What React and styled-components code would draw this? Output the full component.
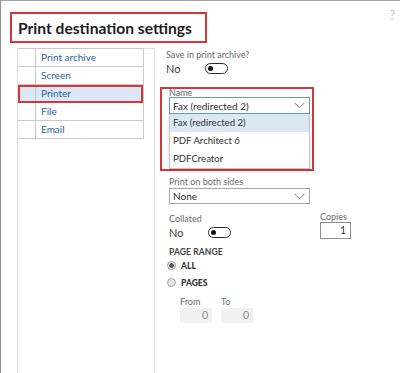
import React from 'react'
import styled, { createGlobalStyle } from 'styled-components'

const GlobalStyle = createGlobalStyle`
    html, body {
        margin: 0;
        padding: 0;
        background: #ffffff;
    }
    body {
        font-family: Lato, "Open Sans", "Liberation Sans", sans-serif;
        color: #333333;
    }
`

const Frame = styled.div`
    box-sizing: border-box;
    width: 400px;
    height: 373px;
    border-top: 1px solid #a4a4a4;
    border-left: 1px solid #8c8c8c;
    display: flex;
    flex-direction: column;
    overflow: hidden;
`

const Header = styled.div`
    display: flex;
    align-items: flex-start;
    margin: 11px 0 0 9px;
`

const TitleBox = styled.div`
    box-sizing: border-box;
    width: 197px;
    height: 31px;
    border: 2px solid #d4363a;
    padding-left: 6px;
    display: flex;
    align-items: center;
`

const Title = styled.h1`
    margin: 0;
    font-size: 15.6px;
    font-weight: 700;
    color: #1e1e1e;
    white-space: nowrap;
`

const Help = styled.span`
    margin: -5px 5px 0 auto;
    font-size: 13px;
    font-weight: 300;
    color: #9a9a9a;
`

const Body = styled.div`
    display: flex;
    flex: 1;
    margin-top: 5px;
`

const Nav = styled.div`
    box-sizing: border-box;
    width: 138px;
    margin-left: 16px;
    border: 1px solid #e2e2e2;
    border-bottom: none;
    border-radius: 2px 2px 0 0;
`

const NavList = styled.div`
    width: 125px;
    border-right: 1px solid #c9c9c9;
    margin-top: -1px;
    border-top: 1px solid #c9c9c9;
`

const NavRow = styled.div`
    display: grid;
    grid-template-columns: 18px 1fr;
    height: 18px;
    box-sizing: border-box;
    border-bottom: 1px solid #c9c9c9;
    background: ${({ $active }) => ($active ? '#dce8f6' : 'transparent')};
    outline: ${({ $active }) => ($active ? '2px solid #d4363a' : 'none')};
    outline-offset: -2px;
`

const NavMark = styled.span`
    border-right: 1px solid #c9c9c9;
`

const NavText = styled.span`
    padding-left: 5px;
    font-size: 10px;
    line-height: 17px;
    color: #2d5f9a;
`

const Form = styled.div`
    flex: 1;
    padding-left: 14px;
    display: flex;
    flex-direction: column;
`

const Label = styled.div`
    font-size: 9px;
    line-height: ${({ $tight }) => ($tight ? 10 : 13)}px;
    color: #6a6a6a;
    white-space: nowrap;
`

const Field = styled.div`
    display: flex;
    flex-direction: column;
    margin-left: ${({ $shift }) => $shift || 0}px;
    margin-top: ${({ $top }) => $top || 0}px;
`

const ToggleRow = styled.div`
    display: flex;
    align-items: center;
    height: 15px;
`

const Value = styled.span`
    width: 39px;
    font-size: 11px;
    color: #444444;
`

const Toggle = styled.span`
    box-sizing: border-box;
    width: 23px;
    height: 11px;
    border: 1.5px solid #2b2b2b;
    border-radius: 6px;
    display: flex;
    align-items: center;
    padding-left: 2px;

    &::before {
        content: '';
        width: 5px;
        height: 5px;
        border-radius: 50%;
        background: #111111;
    }
`

const NameBox = styled.div`
    box-sizing: border-box;
    width: 154px;
    margin: 11px 0 0 -9px;
    padding: 0 2px 0 7px;
    border: 2px solid #d4363a;
`

const NameLabel = styled(Label)`
    line-height: 8px;
    height: 8px;
    overflow: visible;
`

const Select = styled.div`
    box-sizing: border-box;
    width: 141px;
    height: ${({ $h }) => $h || 17}px;
    border: 1px solid ${({ $focus }) => ($focus ? '#5d9ccb' : '#a6a6a6')};
    display: flex;
    align-items: center;
    justify-content: space-between;
    padding: 0 4px 0 3px;
    font-size: 10px;
    color: #2f2f2f;
    background: #ffffff;
`

const Menu = styled.div`
    box-sizing: border-box;
    width: 141px;
    border: 1px solid #c4c4c4;
    border-top: none;
    box-shadow: 0 2px 4px rgba(0, 0, 0, 0.12);
`

const MenuItem = styled.div`
    height: 18px;
    padding-left: 3px;
    font-size: 9.6px;
    line-height: 18px;
    color: #333333;
    background: ${({ $active }) => ($active ? '#dbe7f4' : '#ffffff')};
`

const Pair = styled.div`
    display: flex;
    margin-top: 8px;
`

const NumberBox = styled.div`
    box-sizing: border-box;
    width: ${({ $w }) => $w || 31}px;
    height: ${({ $h }) => $h || 17}px;
    border: ${({ $muted }) => ($muted ? 'none' : '1px solid #8e8e8e')};
    background: ${({ $muted }) => ($muted ? '#f1f1f1' : '#ffffff')};
    color: ${({ $muted }) => ($muted ? '#8a8a8a' : '#333333')};
    font-size: 10.5px;
    text-align: right;
    padding-right: 4px;
    line-height: 15px;
`

const Section = styled.div`
    margin-top: 7px;
    font-size: 8.5px;
    font-weight: 700;
    color: #444444;
    letter-spacing: 0.1px;
`

const RadioRow = styled.div`
    display: flex;
    align-items: center;
    height: 17px;
    margin-left: -2px;
    font-size: 8.5px;
    font-weight: 900;
    color: #333333;
    gap: 5px;
`

const Radio = styled.span`
    box-sizing: border-box;
    width: 9px;
    height: 9px;
    border-radius: 50%;
    border: 1px solid #a8a8a8;
    background: radial-gradient(circle, ${({ $on }) => ($on ? '#555 0 2px, #e6e6e6 2.5px' : '#e6e6e6 0')});
`

const RangeRow = styled.div`
    display: flex;
    gap: 9px;
    margin: 4px 0 0 11px;
`

const Chevron = () => (
    <svg width="11" height="7" viewBox="0 0 11 7">
        <path d="M0.5 0.8 L5.5 5.8 L10.5 0.8" fill="none" stroke="#7a7a7a" strokeWidth="1" />
    </svg>
)

const navItems = ['Print archive', 'Screen', 'Printer', 'File', 'Email']
const printers = ['Fax (redirected 2)', 'PDF Architect 6', 'PDFCreator']

export default function App()
{
    return (
        <>
            <GlobalStyle />
            <Frame>
                <Header>
                    <TitleBox>
                        <Title>Print destination settings</Title>
                    </TitleBox>
                    <Help>?</Help>
                </Header>
                <Body>
                    <Nav>
                        <NavList>
                            {navItems.map((item) =>
                                <NavRow key={item} $active={item === 'Printer'}>
                                    <NavMark />
                                    <NavText>{item}</NavText>
                                </NavRow>
                            )}
                        </NavList>
                    </Nav>
                    <Form>
                        <Field $shift={-3}>
                            <Label>Save in print archive?</Label>
                            <ToggleRow>
                                <Value>No</Value>
                                <Toggle />
                            </ToggleRow>
                        </Field>

                        <NameBox>
                            <NameLabel>Name</NameLabel>
                            <Select $focus>
                                <span>Fax (redirected 2)</span>
                                <Chevron />
                            </Select>
                            <Menu>
                                {printers.map((p, i) =>
                                    <MenuItem key={p} $active={i === 0}>{p}</MenuItem>
                                )}
                            </Menu>
                        </NameBox>

                        <Field $top={4}>
                            <Label>Print on both sides</Label>
                            <Select $h={16}>
                                <span>None</span>
                                <Chevron />
                            </Select>
                        </Field>

                        <Pair>
                            <Field style={{ width: 151 }}>
                                <Label>Collated</Label>
                                <ToggleRow>
                                    <Value>No</Value>
                                    <Toggle />
                                </ToggleRow>
                            </Field>
                            <Field>
                                <Label $tight>Copies</Label>
                                <NumberBox>1</NumberBox>
                            </Field>
                        </Pair>

                        <Section>PAGE RANGE</Section>
                        <RadioRow>
                            <Radio $on />
                            <span>ALL</span>
                        </RadioRow>
                        <RadioRow>
                            <Radio />
                            <span>PAGES</span>
                        </RadioRow>
                        <RangeRow>
                            <Field>
                                <Label>From</Label>
                                <NumberBox $muted $w={32} $h={15}>0</NumberBox>
                            </Field>
                            <Field>
                                <Label>To</Label>
                                <NumberBox $muted $w={32} $h={15}>0</NumberBox>
                            </Field>
                        </RangeRow>
                    </Form>
                </Body>
            </Frame>
        </>
    )
}
